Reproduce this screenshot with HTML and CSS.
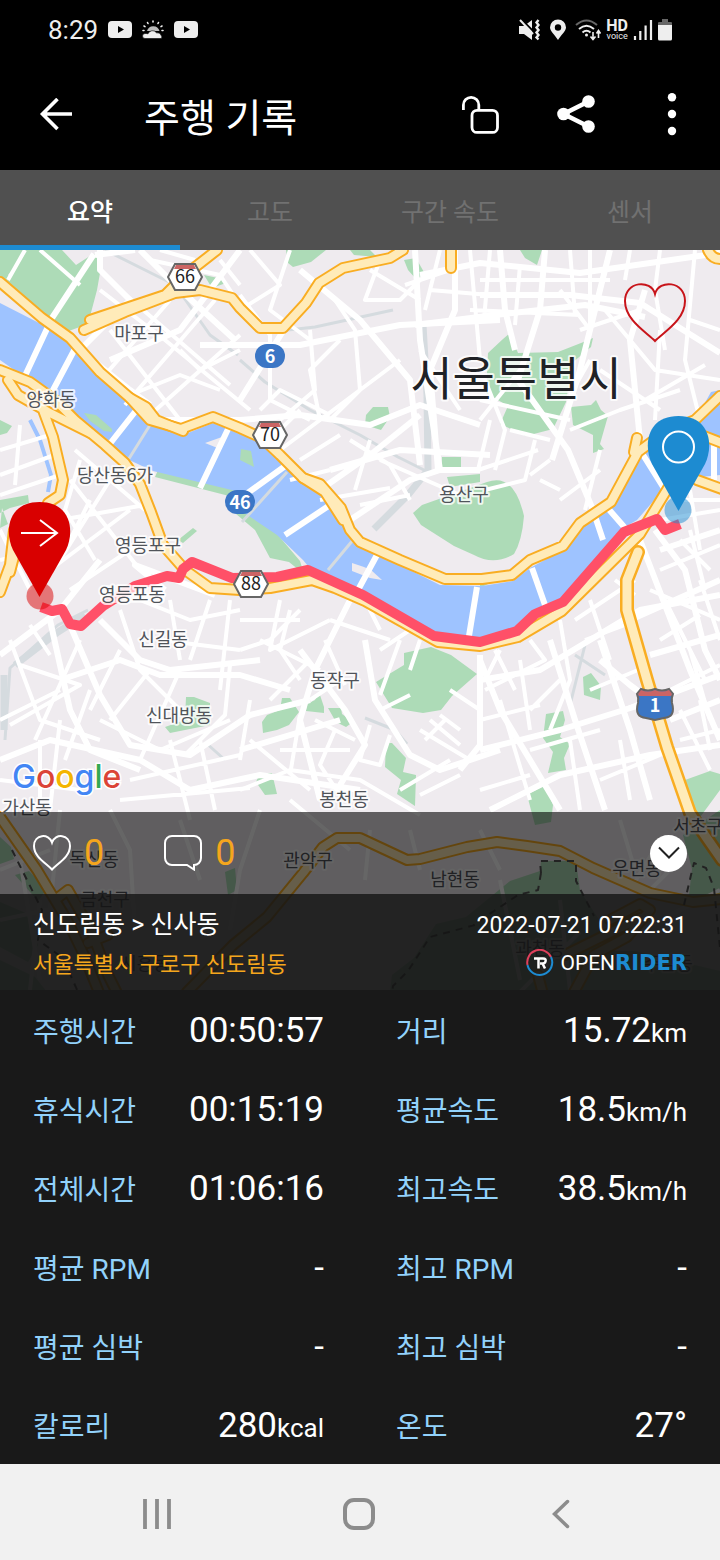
FILE: index.html
```html
<!DOCTYPE html>
<html lang="ko">
<head>
    <meta charset="UTF-8">
    <meta name="viewport" content="width=device-width, initial-scale=1.0">
    <title>주행 기록</title>
    <link rel="stylesheet" href="styles.css">
</head>
<body>
    <div class="statusbar">
        <span class="clock">8:29</span>
        <svg width="24" height="18" viewBox="0 0 24 18"><rect y="0" width="24" height="17" rx="4" fill="#eee"/><path d="M10 5l6 3.500-6 3.500z" fill="#000"/></svg>
        <svg width="22" height="20" viewBox="0 0 22 20">
            <g stroke="#eee" stroke-width="1.600" stroke-linecap="round"><path d="M11 1v1M5.500 2.500l.5 1M16.500 2.500l-.5 1M2 6l1 .6M20 6l-1 .6M1 10.500h1M20 10.500h1"/></g>
            <path d="M5 11a6.500 6.500 0 0 1 12.500 0" fill="#bbb"/>
            <path d="M3 18.500a2.500 2.500 0 0 1 0-5q2 0 3 .3a4.800 4.800 0 0 1 8.500-1q4-.5 4.500 2.500a2 2 0 0 1 0 3.200z" fill="#eee" stroke="#000" stroke-width=".6"/>
        </svg>
        <svg width="24" height="18" viewBox="0 0 24 18"><rect y="0" width="24" height="17" rx="4" fill="#eee"/><path d="M10 5l6 3.500-6 3.500z" fill="#000"/></svg>
        <div class="status-right">
            <svg width="22" height="22" viewBox="0 0 22 22" fill="none" stroke="#eee">
                <path d="M0 7h5l8-6v20l-8-6H0z" fill="#eee" stroke="none"/><path d="M1 -1l14 14" stroke="#000" stroke-width="2"/><path d="M1 1l13 14" stroke-width="2"/>
                <path d="M19.500 1l-2 2.500 2 2.500-2 2.500 2 2.500-2 2.500 2 2.500-2 2.500 2 2" stroke-width="2.400"/>
            </svg>
            <svg width="18" height="22" viewBox="0 0 18 22"><path d="M9 21C6 16 1 12 1 8.500a8 8 0 0 1 16 0C17 12 12 16 9 21z" fill="#eee"/><circle cx="9" cy="8.500" r="3.200" fill="#000"/></svg>
            <svg width="26" height="22" viewBox="0 0 26 22" fill="none" stroke="#eee" stroke-width="2">
                <path d="M1 6q10.500-9 21 0" stroke="#666"/><path d="M4 10q7.500-6.500 15 0M7.500 13.500q4-3.500 8 0"/><circle cx="11.500" cy="16" r="1.500" fill="#eee" stroke="none"/>
                <path d="M18 13v7M15.500 17.500l2.500 3 2.500-3M23.500 19v-7M21.500 14.500l2-3 2 3" stroke-width="1.600"/>
            </svg>
            <span class="hd"><b>HD</b><small>voice</small></span>
            <svg width="20" height="22" viewBox="0 0 20 22" stroke="#eee" stroke-width="2.200"><path d="M2 17v4M7.300 12v9M12.600 6.500V21M18 1v20"/></svg>
            <svg width="14" height="22" viewBox="0 0 14 22"><path d="M4 0h6v3h3a1 1 0 0 1 1 1v3H0V4a1 1 0 0 1 1-1h3z" fill="#666"/><path d="M0 6h14v14a1.500 1.500 0 0 1-1.500 1.500h-11A1.500 1.500 0 0 1 0 20z" fill="#eee"/></svg>
        </div>
    </div>

    <header>
        <button class="back" aria-label="뒤로">
            <svg width="34" height="34" viewBox="0 0 34 34" fill="none" stroke="#fff" stroke-width="3.600"><path d="M33 16H4M18.500 1L3.500 16l15 15"/></svg>
        </button>
        <h1>주행 기록</h1>
        <button class="tool" aria-label="잠금 해제">
            <svg width="38" height="40" viewBox="0 0 38 40" fill="none" stroke="#fff" stroke-width="2.800"><path d="M2.400 15V10a7.700 7.700 0 0 1 15.400 0v5"/><rect x="11" y="15.400" width="25.500" height="22" rx="5"/></svg>
        </button>
        <button class="tool" aria-label="공유">
            <svg width="38" height="40" viewBox="0 0 38 40"><path d="M31.500 6.500L6.500 19l25 12.500" fill="none" stroke="#fff" stroke-width="4.500"/><g fill="#fff"><circle cx="31.500" cy="6.500" r="6.300"/><circle cx="6.500" cy="19" r="6.300"/><circle cx="31.500" cy="31.500" r="6.300"/></g></svg>
        </button>
        <button class="tool" aria-label="더보기">
            <svg width="10" height="44" viewBox="0 0 10 44" fill="#fff"><circle cx="5" cy="4.300" r="4.200"/><circle cx="5" cy="21" r="4.200"/><circle cx="5" cy="38" r="4.200"/></svg>
        </button>
    </header>

    <nav class="tabs">
        <button class="active">요약</button>
        <button>고도</button>
        <button>구간 속도</button>
        <button>센서</button>
    </nav>

    <main>
        <section class="map">
            <svg class="map-canvas" viewBox="0 250 720 740" preserveAspectRatio="xMidYMid slice">
                <defs>
                    <!-- 간선 도로: 테두리와 안쪽을 같은 선으로 두 번 그림 -->
                    <g id="highways">
                        <path d="M0 282L42 318 70 338 100 372 130 398 150 420 181 429 213 417 240 428 262 438 280 455 303 478 320 484 341 508 350 530 360 542 400 560 445 579 482 579 512 575 530 560 563 546 580 523 611 502 638 452 665 432 695 420 720 396"/>
                        <path d="M634 452L637 438"/>
                        <path d="M130 398L146 407 156 420 183 431M303 478L325 492 343 520"/>
                        <path d="M0 370L30 382 55 400 75 420 105 445 125 463 140 484 151 512 163 545 185 570 210 588 240 590 270 588 312 580 335 588 365 601 438 642 480 646 518 637 562 611 640 534 668 488"/>
                        <path d="M8 380L18 395 48 412 90 433M43 410L53 437 63 480 60 495 48 503M14 530L10 565 0 592M21 530L10 572"/>
                        <path d="M90 320L165 295 185 275 217 250"/>
                        <path d="M84 330L125 312 175 293 200 290 232 298 240 308 260 328 283 328 306 303 319 283 343 268 390 258 403 250"/>
                        <path d="M697 480L722 489M704 436L722 443M708 250Q712 259 720 259M451 245v23"/>
                        <path d="M0 817L37 870 67 920 83 953 100 995M55 900L68 890 91 930 108 975 118 995M88 943l20-8"/>
                        <path d="M187 992L233 945 267 917 303 873 323 847 337 838 360 838 407 860 420 859 467 847 497 842 527 846 560 851 593 868 650 893 693 902 722 899"/>
                        <path d="M573 994L594 955 627 937 650 910 640 904 610 920M565 955L640 918M543 994L538 975"/>
                    </g>
                    <path id="expressway" d="M638 552L627 580 627 610 647 680 667 747 690 813 706 837 722 860"/>
                    <symbol id="hex" viewBox="0 0 36 28">
                        <path d="M8 1h20l7 13-7 13H8L1 14z" fill="#fff" stroke="#666" stroke-width="2"/>
                        <path d="M9 2h18l2 4H7z" fill="#cb6464"/>
                    </symbol>
                </defs>

                <rect y="250" width="720" height="742" class="land"/>

                <g class="park">
                    <path d="M0 250h28l-20 25 5 8-13-5zM28 250h34l14 15 17-11 10 2-6 34-9 34-22 8-40-28L0 287z"/>
                    <path d="M286 250h40l-15 12-18 5-5-4zM350 250h20l7 7-23-2zM404 260l12-2 9 16-9 5-8-9zM520 250h22l-5 15-12-7z"/>
                    <path d="M204 275l14 3 8 5-14 5M366 415l7-8 15 0 2 10-9 13-16-5z"/>
                    <path d="M488 353l15-14 7-6 8 20 40-1 23-9 12-5-2 9-19 16-6 39-13 27-27 7-26-12 8-18-22-13z"/>
                    <path d="M571 407l20-2 5-5 5 10 7 6-8 28 4 5-11 4 0-18-20-10z"/>
                    <path d="M442 457h19v15h-20zM447 477l33-3v8l-30 5z"/>
                    <path d="M422 505l65-23q27-10 37 34-2 25-10 38-20 12-40 1l-20-9-33-21-8-12z"/>
                    <path d="M376 682l28-17 0-12 27-6 20 8 26 19-25 22-11 14-18 3-31-5z"/>
                    <path d="M262 722l5-7 13-5 2-12 8 0 9 14-10 13-12 5-14 3zM307 704l8-4 4-8 5 15 0 6-18-2zM328 708l13 0 1 6 11 8-7 5-10-5zM386 743l6 0 14 15-3 14 13 3-1 31-18-12 4-14-16-13zM256 782l4-9 12 0 5 21-12 1z"/>
                    <path d="M583 677l8-4 10 13-1 14-16-5zM546 714l17-3 2 9-5 17 10 7-6 14 2 12-18 3 5-21-10-14zM527 795l18-10 8 20-2 17-16 3z"/>
                    <path d="M685 780l25-9 10 3v16l-22 30-8-18zM85 415l10 5 17 12-5 2-19-14zM186 697l8 0 16 6 0 22-40 8-5-6 20-7z"/>
                    <path d="M0 420l12 6-5 7-7 2zM0 500l28-5 1 8-19 5-10 5zM2 508l-2 20 8-4zM178 540l15-12 4 3-14 12zM158 470l60 12 22 8-3 8-82-21zM237 498l26 25 15 12 22 26 4 13-15-12-19-4-15-28-26-22z"/>
                    <path d="M480 578l30-5-30 15z"/>
                    <path d="M0 837l11 10 3 12-14 5zM15 875l14-4 18 18-9 12zM0 902l28 12 10 31-10 17-28-15zM0 960l35 17 12 15H0z"/>
                    <path d="M225 872l10-4 2 22-9 5zM541 861h35l4 30 20 30 0 30 35 0 85 20v21H390l2-17 22-17 22-34 30-7 44-36 30-10zM683 835l37-25v90l-32 4 4-35z"/>
                </g>
                <path class="water" d="M0 303L43 325 72 343 100 372 130 400 150 425 183 435 213 423 240 434 277 450 300 480 320 488 340 517 352 538 400 565 440 585 482 586 513 581 530 568 563 550 580 527 612 505 643 450 665 435 697 417 711 392 720 390V475L690 478 663 490 637 520 620 530 560 600 533 610 513 630 480 640 433 634 360 590 308 566 303 560 277 535 240 510 240 492 153 471 127 459 107 441 67 412 40 388 0 360z"/>
                <g class="park"><path d="M84 413l12 2 16 14 0 3-8-1-14-10zM241 449l10 2 3 16-14-7z"/></g>
                <path class="land" d="M352 563l12 4 7 3 11 10-12-2-18-7zM205 443l17-6-2 12z"/>
                <path class="creek" d="M30 420L40 440 51 475 48 492"/>

                <g class="rail">
                    <path d="M105 250l50 25 20 10 35 50 28 20M240 360l25 22 45 28 50 25 38 22 30 15M270 332l45-5 78-17M88 610L58 625 10 668 5 740M365 718l30 12 12 14M585 645l-15 60M575 655l30 20M205 742l20 18"/>
                    <path d="M150 425l-25 40M287 472l-45 50M353 540l-25 30"/>
                </g>
                <path class="rail yard" d="M423 325l4 70 1 75-20 25-34 34M85 615L58 632 15 665M4 675L4 730"/>

                <g class="street wide">
                    <path d="M94 254L52 318 24 378M78 343L52 392M138 408L105 450M229 427L200 488M288 464L238 500M330 505L285 535M378 553L358 590M477 587L468 642M532 568L545 605M640 450L665 490M605 505L640 545M714 445v35"/>
                    <path d="M90 358L130 390 150 405M100 250v20l30 30-50 50M140 250l35 35 60 55M300 270l60 50 50 60 10 85"/>
                    <path d="M160 420h80l60-5 70 10 50-20 60 20M200 345l100 0 100-20 100-5"/>
                    <path d="M240 250l-60 80-70 30M240 400l50-80M415 250l5 90 20 130M455 250l0 60-25 60 8 100M500 250l5 60 10 40M545 250l-5 60-22 70 50 70 25 60 10 30M610 250l-30 120-28 90M645 290l-15 50 10 100"/>
                    <path d="M480 295h90l70 8 80 50M420 275l60-12 100 10 140-20M415 325l80-10 90-10 60 12"/>
                    <path d="M330 470l70-20 90 5M320 490l50-35 50-40M350 520l60-40 30-10h40"/>
                    <path d="M0 655L60 610 100 560M50 620l20 90 20 40 50 20M70 625l30 70 30 50 60 10 60-40 60-15"/>
                    <path d="M60 680l60-20 40 15h80l50 15M100 620l40 40 30 10 90-10M0 760l50-20 90 20 50 30 70-15 100 15"/>
                    <path d="M350 600l-35 70-15 50 20 80M300 650l45 60 20 35-25 40M365 640l10 60 35 55 30 15 60-20M480 660l20 50 60 100M460 770l20-25v-90"/>
                    <path d="M480 680l60-10 100-60 80-15M480 750l80-20 80-25 80-30M490 810l70-35 90-20 70-10M550 640l25 80 30 90M600 640l30 90 20 70M640 540l50 130 30 70"/>
                    <path d="M660 550l60-20M630 620l90-40M650 655l70-20M670 720l50-20M655 530l30 40 20 80 15 30M600 660l30 25 20 15"/>
                </g>
                <g class="street">
                    <path d="M25 250L8 280M40 250l40 35M100 290l65 50 85 70M170 300l-65 75M215 300l-90 105M240 335l-90 80M120 290l110 95M110 330l70 90M150 260l70 15 20 30M0 450l50-15M0 475l60-22M20 425l-5 60M0 495l60-20"/>
                    <path d="M195 260l-35-10M220 260l20 25M250 250l30 35-40 25M290 250l-20 60 40 30M240 295l30 40v65l40 20M310 330l5 60-35 30M335 300l20 30 5 60-30 30M340 340l-30 30 10 50 80-60M380 260l-15 40h35l20-20M370 270l50 30M405 285l45-15M440 250l-15 60M430 290l60 5"/>
                    <path d="M470 250l10 110M490 250l-6 70M520 265l-5 60M570 250l5 65M590 250v80M630 250l-5 30M660 250l-5 40 10 60M695 250l-10 110 15 60M480 280h130M470 310l110 5M560 290l30 40M580 330l60-20M590 360l-20 35M605 310l50 60 65 10M600 370l60 40M570 430l50-20 60-20M660 330l-5 90M645 400l60-35M690 320l30 10"/>
                    <path d="M485 380l20 50-10 40M520 370l-40 50M480 400l90 20M490 420l-12 50 60-20M510 430l40 10M535 440l-10 40-40 10M550 460l-20 15M540 480l20 10M600 450l-15 60M560 500l40-30"/>
                    <path d="M420 350l40 60M350 440l40 25 20 35M260 410l20-20 50 25M270 440l30-30M280 450l40-30M300 460l40-25M330 470l-40 10M370 440l-15 50M320 500l70-12M380 460l80 35M360 505l50-10M220 390l-40-15-50 20M180 350l20 20 40-20"/>
                </g>
                <g class="street">
                    <path d="M70 480l70 90M80 460l-15 50 30 50M60 520l85-15M90 500l-30 60M110 480l-50 80M130 510l-80 60M75 450l70 60M145 540l-75 50M0 530l30 60M0 560l40-10M30 625l20 30M20 665l60 20-70 40M10 640l30 80 60 20M0 720l60-30M80 640l-45 100M40 740v60M60 720l-10 90M0 780l80 10M90 690l-25 70"/>
                    <path d="M120 610l20 60 50 50M140 600l50 20 50-10M170 600l10 60M210 600l-20 60M230 600l-10 90M240 620h60M160 640l80 10M150 670l-40 50M120 650l-30 60M180 670l-40 90M230 665l-5 50-40 40M100 720l60 30 70-30M170 740l20 80M200 740l15 70M130 780l110-25M120 800l130-12M250 700l-10 60M300 610l-30 30-30 10M280 600l-10 50 60-30M260 640l60 30"/>
                    <path d="M290 610l-10 40 20 30M325 640l20 45M330 620l60 20M365 600l15 30M410 630l-30 20M400 640l-20 55M420 640l-10 30M310 660l-40 40M340 680l-30 20M300 715l-10 60M315 720l40 20M335 730l-15 35 20 30M280 750h70M380 710l30-15M370 725l-10 35 20 5 10-30M450 690l30 20M420 730l50 30M430 720l30 25M440 715l20 15M425 740l20-20M400 790l50-30M420 795l40-20M240 790l50-20 70 10 60 35M250 740l60 50"/>
                    <path d="M495 650l20 40M500 650l-15 30M530 640l15 20-60 30M560 620l10 60-20 50M520 660l10 70M575 620l60-40M585 640l40-15M590 600l20 60M615 580l20 15M480 720l60-15M500 700l30 100M480 790l50-15M570 740l10 70M530 750l70-20M590 690l60-25M610 715l50-20M560 680l-30 30M620 740l10 60M600 780l60-25"/>
                    <path d="M650 590l70 30M660 570l60-25M665 600l40 80M680 540l30 30M690 530l15 60M700 580l20 60M660 640l40-25M670 690l50-25M690 650l20 70M680 740l40-10M680 710l30 60M700 700l10 50M680 500h40M690 490l10 60M660 520l60-10"/>
                    <path d="M110 810l20 40 5 80M180 820l20 60M260 810l-20 60-10 60M60 810l-10 100M0 870l50-20M0 920l70-15M20 860l20 120M40 900l-10 90M290 800l60 50M370 830l-5 50M410 830l10 40M480 830l20 40M620 820l15 50M660 840l-30 50M680 860l-30 30M560 900l10 90M500 880l20 100M520 992l60-60M640 930l80-40"/>
                </g>
                <path class="street wide" d="M135 250l-40 5M340 720l-100 30M165 590l-30-25 80 30"/>

                <use href="#highways" class="casing"/>
                <use href="#highways" class="fill"/>
                <use href="#expressway" class="casing big"/>
                <use href="#expressway" class="fill big"/>
                <path class="border" d="M12 850l15 30 15 30-4 30 25 18 15 34M541 873l-1-12h36v20l18 35M541 873l-3 17-20 5-45 30M475 925l-45 12-22 34-15 15-1 8M684 905l7-30 3-12 12 5 8 20 6 60"/>

                <path class="route" d="M41 607L52 611 62 609 70 624 81 626 103 606 135 586 167 576 179 578 183 569 192 562 232 578 277 577 308 570 363 595 434 636 480 642 517 631 535 614 563 602 624 532 657 519 665 530 680 524"/>
                <rect x="100" y="585" width="65" height="18" rx="4" fill="#fff" opacity=".6"/>

                <g class="place">
                    <text x="139" y="340">마포구</text>
                    <text x="51" y="406">양화동</text>
                    <text x="115" y="482">당산동6가</text>
                    <text x="148" y="552">영등포구</text>
                    <text x="132" y="601">영등포동</text>
                    <text x="163" y="646">신길동</text>
                    <text x="179" y="722">신대방동</text>
                    <text x="335" y="687">동작구</text>
                    <text x="464" y="501">용산구</text>
                    <text x="344" y="806">봉천동</text>
                    <text x="27" y="814">가산동</text>
                    <text x="94" y="866">독산동</text>
                    <text x="105" y="906">금천구</text>
                    <text x="308" y="867">관악구</text>
                    <text x="455" y="886">남현동</text>
                    <text x="637" y="875">우면동</text>
                    <text x="698" y="833">서초구</text>
                    <text x="145" y="970">시흥동</text>
                    <text x="540" y="955">과천동</text>
                    <text x="668" y="970">주암동</text>
                </g>
                <text class="city" x="516" y="395">서울특별시</text>

                <g class="shield">
                    <use href="#hex" x="167" y="263" width="36" height="28"/><text x="185" y="283">66</text>
                    <use href="#hex" x="252" y="421" width="36" height="28"/><text x="270" y="441">70</text>
                    <use href="#hex" x="233" y="570" width="36" height="28"/><text x="251" y="590">88</text>
                </g>
                <g class="shield blue">
                    <rect x="255" y="344" width="30" height="24" rx="12"/><text x="270" y="363">6</text>
                    <rect x="225" y="490" width="30" height="24" rx="12"/><text x="240" y="509">46</text>
                    <path d="M641 689q7 3 14 0 7 3 14 0l4 5q-2 4-1 9 4 14-8 15l-9 2-9-2q-12-1-8-15 1-5-1-9z" stroke="#666" stroke-width="2"/>
                    <path d="M641 690q7 3 14 0 7 3 14 0l3 4-1 2h-32l-1-2z" fill="#cb6464"/><text x="655" y="712">1</text>
                </g>

                <text class="google" x="12" y="788"><tspan class="g-blue">G</tspan><tspan class="g-red">o</tspan><tspan class="g-yellow">o</tspan><tspan class="g-blue">g</tspan><tspan class="g-green">l</tspan><tspan class="g-red">e</tspan></text>

                <!-- 출발 / 도착 핀 -->
                <circle cx="40" cy="596" r="13.500" fill="#d90000" opacity=".5"/>
                <path d="M39.500 597L13 550C4 531 8 502 39.500 502S75 531 66 550z" fill="#d90000"/>
                <path d="M21 533h35M40 520l17 13-17 13" fill="none" stroke="#fff" stroke-width="2"/>
                <circle cx="678" cy="510" r="13.500" fill="#1d8bd1" opacity=".5"/>
                <path d="M678.500 511L652 464C643 445 647 416 678.500 416S714 445 705 464z" fill="#1d8bd1"/>
                <circle cx="678.500" cy="447" r="15.500" fill="none" stroke="#fff" stroke-width="2"/>
            </svg>

            <button class="favorite" aria-label="즐겨찾기">
                <svg width="62" height="60" viewBox="0 0 62 60" fill="none" stroke="#c8141a" stroke-width="2"><path d="M31 58C22 49 1 37 1 18 1-2 27-4 31 11 35-4 61-2 61 18 61 37 40 49 31 58z"/></svg>
            </button>

            <div class="social">
                <button aria-label="좋아요">
                    <svg width="38" height="36" viewBox="0 0 38 36" fill="none" stroke="#fff" stroke-width="2"><path d="M19 34.500C13 28 1 22 1 11 1-1 16-2 19 7.500 22-2 37-1 37 11 37 22 25 28 19 34.500z"/></svg>
                    <span>0</span>
                </button>
                <button aria-label="댓글">
                    <svg width="38" height="36" viewBox="0 0 38 36" fill="none" stroke="#fff" stroke-width="2"><path d="M8 1h22a7 7 0 0 1 7 7v15a7 7 0 0 1-7 7v4.500L23 30H8a7 7 0 0 1-7-7V8a7 7 0 0 1 7-7z"/></svg>
                    <span>0</span>
                </button>
                <button class="collapse" aria-label="접기">
                    <svg width="22" height="14" viewBox="0 0 22 14" fill="none" stroke="#222" stroke-width="2"><path d="M1 1.500l10 10 10-10"/></svg>
                </button>
            </div>

            <div class="info">
                <div>
                    <h2>신도림동 &gt; 신사동</h2>
                    <p class="address">서울특별시 구로구 신도림동</p>
                </div>
                <div class="info-right">
                    <time datetime="2022-07-21T07:22:31">2022-07-21 07:22:31</time>
                    <p class="brand">
                        <svg width="28" height="28" viewBox="0 0 28 28" fill="none" stroke-width="2"><path d="M1.500 16A12.500 12.500 0 0 1 25 8" stroke="#e0405c"/><path d="M25 8A12.500 12.500 0 1 1 1.500 16" stroke="#1d8bd1"/><path d="M8 9.500h9q3.500 0 2.500 3-.5 2-3 2l2.500 5M12.500 10v9.500M14 14.500h3" stroke="#fff" stroke-width="2.500"/></svg>
                        <span>OPEN</span><b>RIDER</b>
                    </p>
                </div>
            </div>
        </section>

        <dl class="stats">
            <div><dt>주행시간</dt><dd>00:50:57</dd></div>
            <div><dt>거리</dt><dd>15.72<small>km</small></dd></div>
            <div><dt>휴식시간</dt><dd>00:15:19</dd></div>
            <div><dt>평균속도</dt><dd>18.5<small>km/h</small></dd></div>
            <div><dt>전체시간</dt><dd>01:06:16</dd></div>
            <div><dt>최고속도</dt><dd>38.5<small>km/h</small></dd></div>
            <div><dt>평균 RPM</dt><dd>-</dd></div>
            <div><dt>최고 RPM</dt><dd>-</dd></div>
            <div><dt>평균 심박</dt><dd>-</dd></div>
            <div><dt>최고 심박</dt><dd>-</dd></div>
            <div><dt>칼로리</dt><dd>280<small>kcal</small></dd></div>
            <div><dt>온도</dt><dd>27°</dd></div>
        </dl>
    </main>

    <footer class="navbar">
        <button aria-label="최근 앱"><svg width="30" height="42" viewBox="0 0 30 42" stroke="#8c8c8c" stroke-width="3.800" stroke-linecap="butt"><path d="M3 6v30M15 6v30M27 6v30"/></svg></button>
        <button aria-label="홈"><svg width="32" height="44" viewBox="0 0 32 44" fill="none" stroke="#8c8c8c" stroke-width="4"><rect x="2" y="8" width="28" height="28" rx="9"/></svg></button>
        <button aria-label="뒤로"><svg width="18" height="30" viewBox="0 0 18 30" fill="none" stroke="#8c8c8c" stroke-width="3.500" stroke-linecap="round"><path d="M15.500 2.500L2.500 15l13 12.500"/></svg></button>
    </footer>
</body>
</html>
```

FILE: styles.css
```css
* {
    box-sizing: border-box;
}

body {
    margin: 0;
    min-height: 100vh;
    display: flex;
    flex-direction: column;
    background: #000;
    color: #fff;
    font-family: Roboto, "Noto Sans CJK KR", sans-serif;
}

svg {
    display: block;
    flex: none;
}

button {
    padding: 0;
    border: none;
    background: none;
    color: inherit;
    font: inherit;
    cursor: pointer;
}

h1, h2, p, dl, dd {
    margin: 0;
    font-weight: 400;
}

/* 상태 표시줄 */
.statusbar {
    display: flex;
    align-items: center;
    gap: 10px;
    height: 60px;
    padding: 0 48px;
    color: #eee;
}

.clock {
    font-size: 26px;
}

.status-right {
    display: flex;
    align-items: center;
    gap: 5px;
    margin-left: auto;
}

.status-right svg:nth-child(2) {
    margin: 0 3px;
}

.hd {
    display: flex;
    flex-direction: column;
    align-items: center;
    font-size: 16px;
    line-height: 12px;
}

.hd small {
    font-size: 9px;
    line-height: 8px;
}

/* 헤더 */
header {
    display: flex;
    align-items: center;
    height: 110px;
}

.back,
.tool {
    display: flex;
    align-items: center;
    justify-content: center;
    height: 96px;
}

.back {
    width: 112px;
}

.tool {
    width: 96px;
}

h1 {
    flex: 1;
    margin-left: 32px;
    font-size: 39px;
}

.tabs {
    display: grid;
    grid-template-columns: repeat(4, 1fr);
    height: 80px;
    background: #505050;
}

.tabs button {
    border-top: 5px solid transparent;
    border-bottom: 5px solid transparent;
    color: #717171;
    font-size: 25px;
}

.tabs .active {
    border-bottom-color: #1d8bd1;
    color: #fff;
    font-weight: 500;
}

main {
    flex: 1;
    display: flex;
    flex-direction: column;
    background: #191919;
}

/* 지도 */
.map {
    position: relative;
    flex: 1;
    display: flex;
    flex-direction: column;
    min-height: 600px;
    overflow: hidden;
}

.map-canvas {
    position: absolute;
    inset: 0;
    width: 100%;
    height: 100%;
}

.land { fill: #efebef; }
.park { fill: #addbb7; }
.water { fill: #9ec3ff; }

.creek,
.rail,
.street,
.casing,
.fill,
.border,
.route {
    fill: none;
    stroke-linejoin: round;
}

.creek {
    stroke: #9ec3ff;
    stroke-width: 4px;
}

.rail {
    stroke: #d5dbdf;
    stroke-width: 3px;
}

.rail.yard {
    stroke-width: 7px;
}

.street {
    stroke: #fff;
    stroke-width: 4px;
}

.street.wide {
    stroke-width: 6px;
}

.casing {
    stroke: #f9ad22;
    stroke-width: 12px;
    stroke-linecap: round;
}

.fill {
    stroke: #ffebb9;
    stroke-width: 8px;
    stroke-linecap: round;
}

.casing.big { stroke-width: 14px; }
.fill.big { stroke-width: 9px; }

.border {
    stroke: #555;
    stroke-width: 2px;
    stroke-dasharray: 7 6;
}

.route {
    stroke: #ff5068;
    stroke-width: 10px;
}

.place,
.city {
    fill: #50545a;
    stroke: #fff;
    stroke-opacity: 0.8;
    stroke-width: 4px;
    stroke-linejoin: round;
    paint-order: stroke;
    font-family: "Noto Sans CJK KR", sans-serif;
    font-size: 18px;
    text-anchor: middle;
}

.city {
    fill: #202226;
    font-size: 46px;
}

.shield {
    fill: #222;
    font-family: "Noto Sans CJK KR", sans-serif;
    font-size: 18px;
    text-anchor: middle;
}

.blue {
    fill: #3b76c5;
}

.blue text {
    fill: #fff;
    font-weight: 700;
}

.google {
    font-family: Inter, sans-serif;
    font-size: 32px;
    font-weight: 500;
    stroke: #fff;
    stroke-width: 3px;
    paint-order: stroke;
}

.g-blue { fill: #4285f4; }
.g-red { fill: #db4437; }
.g-yellow { fill: #f4b400; }
.g-green { fill: #34a853; }

.favorite {
    position: relative;
    align-self: flex-end;
    margin: 33px 34px auto 0;
}

.social {
    position: relative;
    display: flex;
    align-items: center;
    gap: 60px;
    height: 82px;
    padding: 0 33px;
    background: rgba(0, 0, 0, 0.6);
    color: #f5a61d;
    font-size: 36px;
}

.social button {
    display: flex;
    align-items: center;
    gap: 13px;
}

.social .collapse {
    justify-content: center;
    width: 37px;
    height: 37px;
    margin-left: auto;
    border-radius: 50%;
    background: #fff;
}

.info {
    position: relative;
    display: flex;
    justify-content: space-between;
    height: 96px;
    padding: 12px 33px 0;
    background: rgba(17, 17, 17, 0.92);
}

h2 {
    font-size: 25px;
    line-height: 38px;
}

.address {
    color: #f5a61d;
    font-size: 22px;
    line-height: 42px;
}

.info-right {
    display: flex;
    flex-direction: column;
    align-items: flex-end;
}

time {
    font-size: 23px;
    line-height: 40px;
}

.brand {
    display: flex;
    align-items: center;
    height: 34px;
    font-size: 21px;
}

.brand svg {
    margin-right: 6px;
}

.brand b {
    color: #1d8bd1;
    font-family: "DejaVu Sans", sans-serif;
}

/* 주행 통계 */
.stats {
    display: grid;
    grid-template-columns: 1fr 1fr;
    column-gap: 72px;
    padding: 0 33px;
}

.stats div {
    display: flex;
    align-items: center;
    justify-content: space-between;
    height: 79px;
}

dt {
    color: #92d2fb;
    font-size: 28px;
}

dd {
    padding-top: 2px;
    font-size: 35px;
}

dd small {
    font-size: 26px;
}

/* 하단 내비게이션 */
.navbar {
    display: grid;
    grid-template-columns: repeat(3, 1fr);
    height: 96px;
    padding: 4px 58px 0 56px;
    background: #f1f1f1;
}

.navbar button {
    display: flex;
    align-items: center;
    justify-content: center;
}
```
